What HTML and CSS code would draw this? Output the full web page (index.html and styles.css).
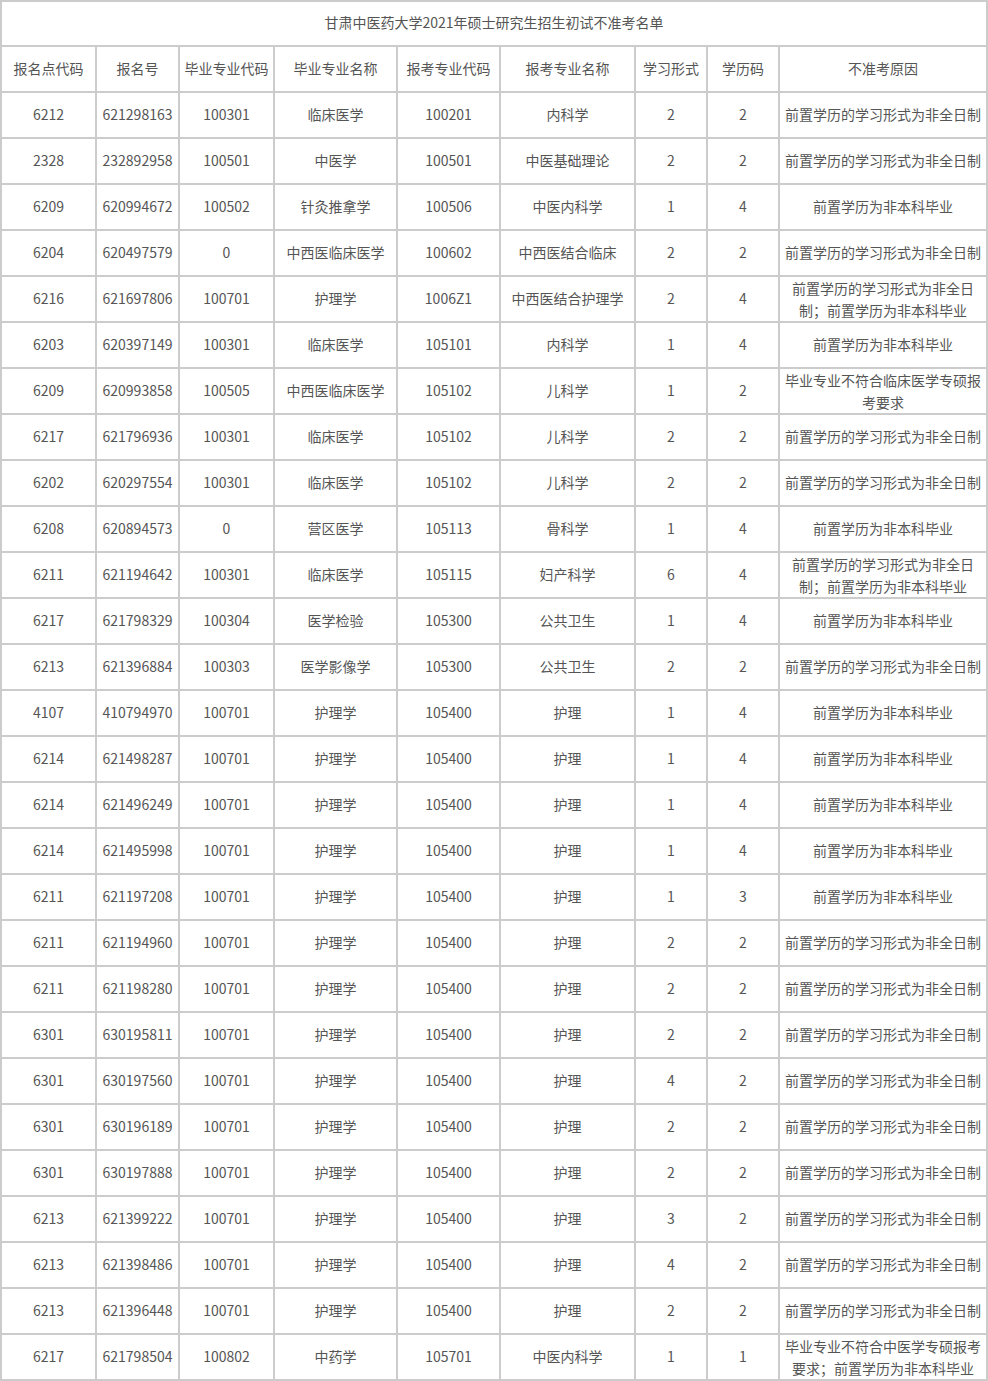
FILE: index.html
```html
<!DOCTYPE html>
<html lang="zh-CN">
<head>
<meta charset="utf-8">
<title>甘肃中医药大学2021年硕士研究生招生初试不准考名单</title>
<link rel="stylesheet" href="styles.css">
</head>
<body>
<table class="list">
<colgroup>
<col class="c1"><col class="c2"><col class="c3"><col class="c4"><col class="c5"><col class="c6"><col class="c7"><col class="c8"><col class="c9">
</colgroup>
<tbody>
<tr class="title-row"><td colspan="9">甘肃中医药大学2021年硕士研究生招生初试不准考名单</td></tr>
<tr><td>报名点代码</td><td>报名号</td><td>毕业专业代码</td><td>毕业专业名称</td><td>报考专业代码</td><td>报考专业名称</td><td>学习形式</td><td>学历码</td><td>不准考原因</td></tr>
<tr><td>6212</td><td>621298163</td><td>100301</td><td>临床医学</td><td>100201</td><td>内科学</td><td>2</td><td>2</td><td>前置学历的学习形式为非全日制</td></tr>
<tr><td>2328</td><td>232892958</td><td>100501</td><td>中医学</td><td>100501</td><td>中医基础理论</td><td>2</td><td>2</td><td>前置学历的学习形式为非全日制</td></tr>
<tr><td>6209</td><td>620994672</td><td>100502</td><td>针灸推拿学</td><td>100506</td><td>中医内科学</td><td>1</td><td>4</td><td>前置学历为非本科毕业</td></tr>
<tr><td>6204</td><td>620497579</td><td>0</td><td>中西医临床医学</td><td>100602</td><td>中西医结合临床</td><td>2</td><td>2</td><td>前置学历的学习形式为非全日制</td></tr>
<tr><td>6216</td><td>621697806</td><td>100701</td><td>护理学</td><td>1006Z1</td><td>中西医结合护理学</td><td>2</td><td>4</td><td class="wrap">前置学历的学习形式为非全日制；前置学历为非本科毕业</td></tr>
<tr><td>6203</td><td>620397149</td><td>100301</td><td>临床医学</td><td>105101</td><td>内科学</td><td>1</td><td>4</td><td>前置学历为非本科毕业</td></tr>
<tr><td>6209</td><td>620993858</td><td>100505</td><td>中西医临床医学</td><td>105102</td><td>儿科学</td><td>1</td><td>2</td><td class="wrap">毕业专业不符合临床医学专硕报考要求</td></tr>
<tr><td>6217</td><td>621796936</td><td>100301</td><td>临床医学</td><td>105102</td><td>儿科学</td><td>2</td><td>2</td><td>前置学历的学习形式为非全日制</td></tr>
<tr><td>6202</td><td>620297554</td><td>100301</td><td>临床医学</td><td>105102</td><td>儿科学</td><td>2</td><td>2</td><td>前置学历的学习形式为非全日制</td></tr>
<tr><td>6208</td><td>620894573</td><td>0</td><td>营区医学</td><td>105113</td><td>骨科学</td><td>1</td><td>4</td><td>前置学历为非本科毕业</td></tr>
<tr><td>6211</td><td>621194642</td><td>100301</td><td>临床医学</td><td>105115</td><td>妇产科学</td><td>6</td><td>4</td><td class="wrap">前置学历的学习形式为非全日制；前置学历为非本科毕业</td></tr>
<tr><td>6217</td><td>621798329</td><td>100304</td><td>医学检验</td><td>105300</td><td>公共卫生</td><td>1</td><td>4</td><td>前置学历为非本科毕业</td></tr>
<tr><td>6213</td><td>621396884</td><td>100303</td><td>医学影像学</td><td>105300</td><td>公共卫生</td><td>2</td><td>2</td><td>前置学历的学习形式为非全日制</td></tr>
<tr><td>4107</td><td>410794970</td><td>100701</td><td>护理学</td><td>105400</td><td>护理</td><td>1</td><td>4</td><td>前置学历为非本科毕业</td></tr>
<tr><td>6214</td><td>621498287</td><td>100701</td><td>护理学</td><td>105400</td><td>护理</td><td>1</td><td>4</td><td>前置学历为非本科毕业</td></tr>
<tr><td>6214</td><td>621496249</td><td>100701</td><td>护理学</td><td>105400</td><td>护理</td><td>1</td><td>4</td><td>前置学历为非本科毕业</td></tr>
<tr><td>6214</td><td>621495998</td><td>100701</td><td>护理学</td><td>105400</td><td>护理</td><td>1</td><td>4</td><td>前置学历为非本科毕业</td></tr>
<tr><td>6211</td><td>621197208</td><td>100701</td><td>护理学</td><td>105400</td><td>护理</td><td>1</td><td>3</td><td>前置学历为非本科毕业</td></tr>
<tr><td>6211</td><td>621194960</td><td>100701</td><td>护理学</td><td>105400</td><td>护理</td><td>2</td><td>2</td><td>前置学历的学习形式为非全日制</td></tr>
<tr><td>6211</td><td>621198280</td><td>100701</td><td>护理学</td><td>105400</td><td>护理</td><td>2</td><td>2</td><td>前置学历的学习形式为非全日制</td></tr>
<tr><td>6301</td><td>630195811</td><td>100701</td><td>护理学</td><td>105400</td><td>护理</td><td>2</td><td>2</td><td>前置学历的学习形式为非全日制</td></tr>
<tr><td>6301</td><td>630197560</td><td>100701</td><td>护理学</td><td>105400</td><td>护理</td><td>4</td><td>2</td><td>前置学历的学习形式为非全日制</td></tr>
<tr><td>6301</td><td>630196189</td><td>100701</td><td>护理学</td><td>105400</td><td>护理</td><td>2</td><td>2</td><td>前置学历的学习形式为非全日制</td></tr>
<tr><td>6301</td><td>630197888</td><td>100701</td><td>护理学</td><td>105400</td><td>护理</td><td>2</td><td>2</td><td>前置学历的学习形式为非全日制</td></tr>
<tr><td>6213</td><td>621399222</td><td>100701</td><td>护理学</td><td>105400</td><td>护理</td><td>3</td><td>2</td><td>前置学历的学习形式为非全日制</td></tr>
<tr><td>6213</td><td>621398486</td><td>100701</td><td>护理学</td><td>105400</td><td>护理</td><td>4</td><td>2</td><td>前置学历的学习形式为非全日制</td></tr>
<tr><td>6213</td><td>621396448</td><td>100701</td><td>护理学</td><td>105400</td><td>护理</td><td>2</td><td>2</td><td>前置学历的学习形式为非全日制</td></tr>
<tr><td>6217</td><td>621798504</td><td>100802</td><td>中药学</td><td>105701</td><td>中医内科学</td><td>1</td><td>1</td><td class="wrap">毕业专业不符合中医学专硕报考要求；前置学历为非本科毕业</td></tr>
</tbody>
</table>
</body>
</html>
```

FILE: styles.css
```css
html, body {
  margin: 0;
  padding: 0;
  background: #ffffff;
}

body {
  font-family: "Noto Sans CJK SC", "Noto Sans", sans-serif;
  font-size: 14px;
  color: #555555;
}

.list {
  width: 988px;
  table-layout: fixed;
  border-collapse: separate;
  border-spacing: 0;
  border: 1px solid #cccccc;
}

.c1 { width: 95px; }
.c2 { width: 83px; }
.c3 { width: 95px; }
.c4 { width: 123px; }
.c5 { width: 103px; }
.c6 { width: 135px; }
.c7 { width: 72px; }
.c8 { width: 72px; }
.c9 { width: 208px; }

.list td {
  border: 1px solid #cccccc;
  height: 42px;
  padding: 0 4px 2px;
  text-align: center;
  vertical-align: middle;
  line-height: 22px;
  white-space: normal;
  word-break: normal;
}

.list td.wrap {
  padding-bottom: 0;
}

.list .title-row td {
  height: 39px;
  padding-bottom: 4px;
}
```
